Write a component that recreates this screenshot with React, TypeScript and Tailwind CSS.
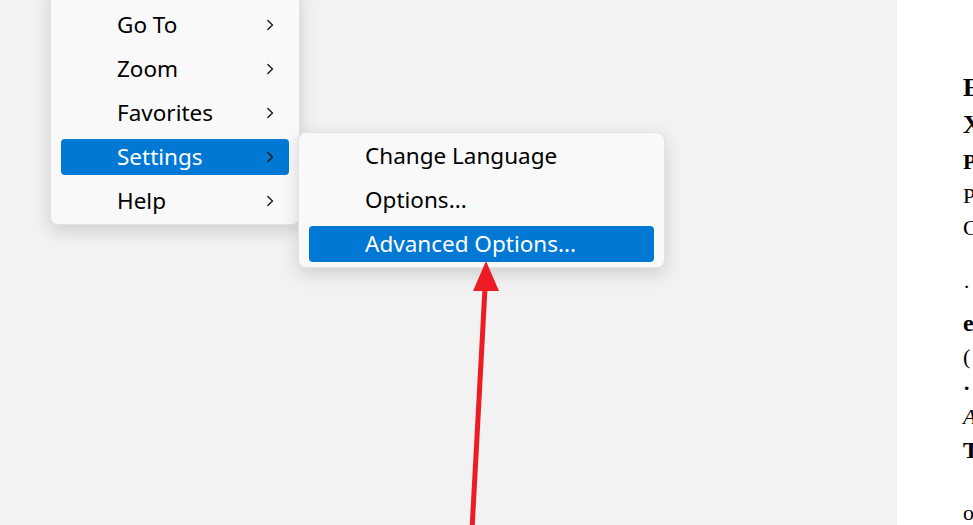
import React from "react";

const Chevron = () => (
  <svg width="8" height="12" viewBox="0 0 8 12" className="shrink-0">
    <path d="M1.8 1.5 L6.5 6 L1.8 10.5" fill="none" stroke="#1a1a1a" strokeWidth="1.4" strokeLinecap="round" strokeLinejoin="round" />
  </svg>
);

const Item = ({ label, active, sub }: { label: string; active?: boolean; sub?: boolean }) => (
  <div className="h-[44px] px-[10px] py-[4px]">
    <div
      className={
        "h-[36px] rounded-[4px] flex items-center pl-[56px] pr-[15px] " +
        (active ? "bg-[#0078d4] text-white" : "text-black")
      }
    >
      <span className="flex-1 whitespace-nowrap">{label}</span>
      {sub && <Chevron />}
    </div>
  </div>
);

const Line = ({ h, cls, children }: { h: number; cls: string; children: React.ReactNode }) => (
  <div className={"flex items-center " + cls} style={{ height: h }}>
    {children}
  </div>
);

export default function App() {
  const fontStack = { fontFamily: '"Noto Sans", "Open Sans", sans-serif' };
  return (
    <div className="w-[973px] h-[525px] overflow-hidden flex bg-[#f2f2f2]">
      <div className="relative w-[897px] h-full flex items-start pl-[50px] text-[22.5px]" style={fontStack}>
        <div className="w-[250px] mt-[-12px] pt-[14px] pb-[1px] bg-[#f9f9f9] rounded-[8px] border border-[#e3e3e3] shadow-[0_6px_18px_rgba(0,0,0,0.15)]">
          <Item label="Go To" sub />
          <Item label="Zoom" sub />
          <Item label="Favorites" sub />
          <Item label="Settings" sub active />
          <Item label="Help" sub />
        </div>
        <div className="w-[367px] mt-[132px] ml-[-2px] py-[1px] bg-[#f9f9f9] rounded-[8px] border border-[#e3e3e3] shadow-[0_6px_18px_rgba(0,0,0,0.15)]">
          <Item label="Change Language" />
          <Item label="Options..." />
          <Item label="Advanced Options..." active />
        </div>
        <svg className="absolute left-0 top-0" width="897" height="525" viewBox="0 0 897 525">
          <line x1="472" y1="530" x2="485" y2="288" stroke="#ed1c24" strokeWidth="5" />
          <polygon points="486,261 473,291 499,291" fill="#ed1c24" />
        </svg>
      </div>
      <div
        className="w-[76px] h-full bg-white pl-[66px] pt-[70px] text-black whitespace-nowrap overflow-hidden leading-none"
        style={{ fontFamily: '"Liberation Serif", serif' }}
      >
        <Line h={36} cls="font-bold text-[26px]">Ea</Line>
        <Line h={38} cls="font-bold text-[26px]">Xa</Line>
        <Line h={36} cls="font-bold text-[22px]">Pr</Line>
        <Line h={32} cls="text-[22px]">Pe</Line>
        <Line h={31} cls="text-[22px]">Co</Line>
        <Line h={26} cls="text-[22px]"> </Line>
        <Line h={36} cls="text-[22px]">·</Line>
        <Line h={36} cls="font-bold text-[24px]">e</Line>
        <Line h={32} cls="text-[22px]">(</Line>
        <Line h={30} cls="font-bold text-[22px]">·</Line>
        <Line h={28} cls="italic text-[22px]">A</Line>
        <Line h={38} cls="font-bold text-[24px]">T</Line>
        <Line h={24} cls="text-[22px]"> </Line>
        <Line h={40} cls="text-[22px]">o</Line>
      </div>
    </div>
  );
}
